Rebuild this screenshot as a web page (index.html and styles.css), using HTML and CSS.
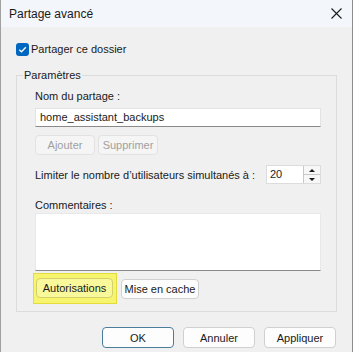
FILE: index.html
```html
<!DOCTYPE html>
<html lang="fr">
<head>
    <meta charset="UTF-8">
    <title>Partage avancé</title>
    <link rel="stylesheet" href="styles.css">
</head>
<body>
    <div class="dialog">
        <div class="titlebar">
            <span class="title">Partage avancé</span>
            <svg class="close" width="11" height="11" viewBox="0 0 11 11">
                <path d="M0.5 0.5 L10.5 10.5 M10.5 0.5 L0.5 10.5" stroke="#1b1b1b" stroke-width="1.1" fill="none"/>
            </svg>
        </div>

        <div class="content">
            <label class="check-row">
                <span class="checkbox">
                    <svg width="13" height="13" viewBox="0 0 13 13">
                        <path d="M3.3 6.7 L5.5 8.8 L9.8 4.3" stroke="#fff" stroke-width="1.3" fill="none"/>
                    </svg>
                </span>
                <span>Partager ce dossier</span>
            </label>

            <fieldset class="group">
                <legend>Paramètres</legend>

                <div class="label first">Nom du partage :</div>
                <div class="field">home_assistant_backups</div>

                <div class="btn-row">
                    <button class="btn disabled">Ajouter</button>
                    <button class="btn disabled">Supprimer</button>
                </div>

                <div class="limit-row">
                    <span class="label">Limiter le nombre d’utilisateurs simultanés à :</span>
                    <div class="spin">
                        <span class="spin-value">20</span>
                        <div class="spin-arrows">
                            <span class="arrow up"></span>
                            <span class="arrow down"></span>
                        </div>
                    </div>
                </div>

                <div class="label comments">Commentaires :</div>
                <div class="textarea"></div>

                <div class="bottom-row">
                    <div class="highlight">
                        <button class="btn yellow">Autorisations</button>
                    </div>
                    <button class="btn cache">Mise en cache</button>
                </div>
            </fieldset>

            <div class="footer">
                <button class="btn action default">OK</button>
                <button class="btn action">Annuler</button>
                <button class="btn action">Appliquer</button>
            </div>
        </div>
    </div>
</body>
</html>
```

FILE: styles.css
```css
* {
    margin: 0;
    padding: 0;
    box-sizing: border-box;
}
body {
    background: #ffffff;
    font-family: "Liberation Sans", Arial, sans-serif;
    font-size: 11px;
    color: #1a1a1a;
    white-space: nowrap;
}
.dialog {
    width: 353px;
    height: 352px;
    border-left: 1px solid #a0a0a0;
    border-right: 1px solid #8c8c8c;
    display: flex;
    flex-direction: column;
}
.titlebar {
    flex-shrink: 0;
    height: 27px;
    background: #f3f6fa;
    display: flex;
    align-items: center;
    justify-content: space-between;
    padding: 0 10px 0 8px;
}
.title {
    font-size: 12px;
    line-height: 16px;
}
.content {
    flex: 1;
    background: #f0f0f0;
    padding-top: 16px;
}
/* case à cocher */
.check-row {
    display: flex;
    align-items: center;
    gap: 2px;
    padding-left: 15px;
    height: 13px;
    line-height: 13px;
}
.checkbox {
    width: 13px;
    height: 13px;
    border-radius: 3px;
    background: #0067c0;
    display: flex;
}
/* groupe Paramètres */
.group {
    margin: 11px 0 0 15px;
    width: 321px;
    border: 1px solid #dcdcdc;
    padding: 0 14px 7px 18px;
}
.group legend {
    margin-left: -12px;
    padding: 0 1px;
    line-height: 16px;
}
.label {
    line-height: 16px;
}
.label.first {
    margin-top: 5px;
}
.field {
    margin-top: 4px;
    width: 286px;
    height: 19px;
    background: #ffffff;
    border: 1px solid #e3e3e3;
    border-bottom-color: #8a8a8a;
    padding-left: 4px;
    line-height: 17px;
}
.btn {
    font-family: inherit;
    font-size: 11px;
    color: #1a1a1a;
    background: #fdfdfd;
    border: 1px solid #d0d0d0;
    border-radius: 4px;
    height: 20px;
    line-height: 18px;
    white-space: nowrap;
}
.btn-row {
    display: flex;
    gap: 3px;
    margin-top: 8px;
}
.btn.disabled {
    background: #f5f5f5;
    border-color: #e2e2e2;
    color: #a0a0a0;
    width: 60px;
}
.limit-row {
    display: flex;
    align-items: center;
    justify-content: space-between;
    margin-top: 10px;
    width: 286px;
}
.spin {
    display: flex;
    width: 55px;
    height: 19px;
    background: #ffffff;
    border: 1px solid #dcdcdc;
}
.spin-value {
    flex: 1;
    padding-left: 3px;
    line-height: 17px;
}
.spin-arrows {
    width: 17px;
    display: flex;
    flex-direction: column;
    border-left: 1px solid #c8c8c8;
}
.arrow {
    flex: 1;
    display: flex;
    justify-content: center;
    align-items: center;
    border-bottom: 1px solid #c8c8c8;
    background: #f7f7f7;
}
.arrow.down {
    border-bottom: none;
}
.arrow.up::after {
    content: "";
    border-left: 3px solid transparent;
    border-right: 3px solid transparent;
    border-bottom: 3px solid #1a1a1a;
}
.arrow.down::after {
    content: "";
    border-left: 3px solid transparent;
    border-right: 3px solid transparent;
    border-top: 3px solid #1a1a1a;
}
.label.comments {
    margin-top: 13px;
}
.textarea {
    width: 286px;
    height: 58px;
    background: #ffffff;
    border: 1px solid #e8e8e8;
    border-bottom-color: #8a8a8a;
}
.bottom-row {
    display: flex;
    align-items: center;
    gap: 4px;
    margin-top: 2px;
    margin-left: -2px;
}
/* surlignage jaune */
.highlight {
    width: 84px;
    height: 31px;
    background: #f7f56e;
    border: 1px solid #e2dc3c;
    padding: 4px 3px 0 2px;
}
.btn.yellow {
    width: 77px;
    background: #f9f89a;
    border-color: #d4d06a;
}
.btn.cache {
    width: 78px;
}
.footer {
    display: flex;
    justify-content: flex-end;
    gap: 9px;
    padding-right: 16px;
    margin-top: 15px;
}
.btn.action {
    width: 72px;
    height: 21px;
}
.btn.default {
    border-color: #4a7d9c;
}
```
